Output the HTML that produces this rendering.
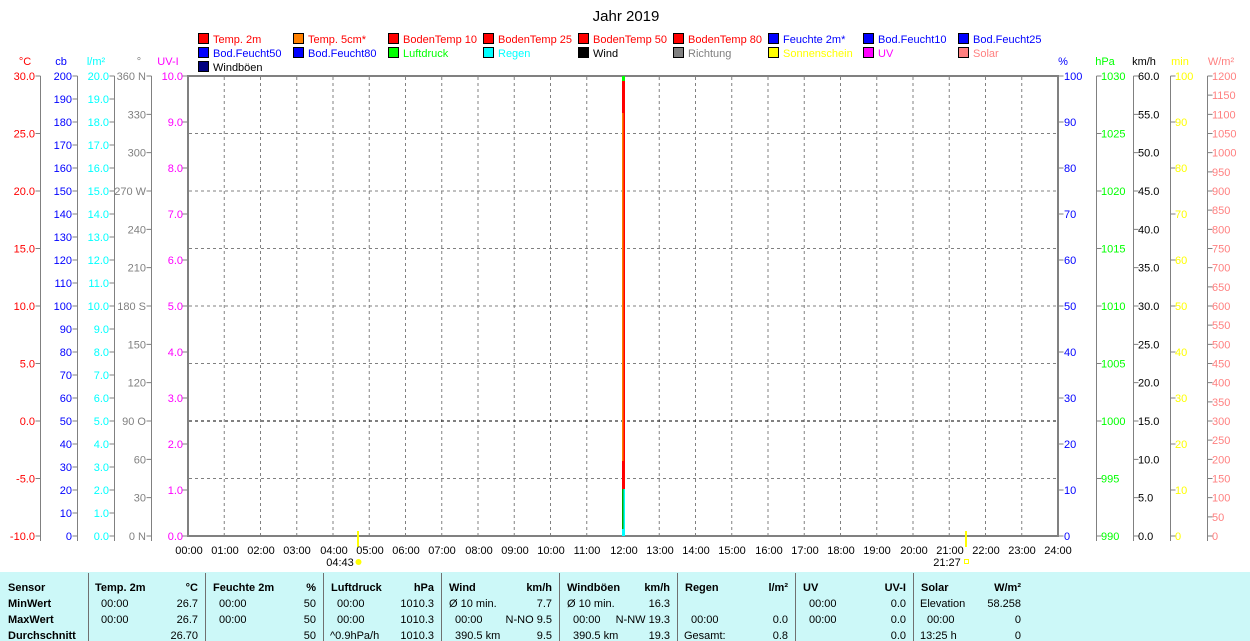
<!DOCTYPE html>
<html><head><meta charset="utf-8"><style>
html,body{margin:0;padding:0;background:#fff;}
svg{display:block;font-family:"Liberation Sans",sans-serif;font-size:11px;}
</style></head><body>
<svg width="1250" height="641" viewBox="0 0 1250 641" xmlns="http://www.w3.org/2000/svg">
<text x="626" y="21" font-size="15" text-anchor="middle">Jahr 2019</text>

<g stroke="#000" stroke-width="1">
<rect x="198.5" y="33.5" width="10" height="10" fill="#f00"/>
<rect x="293.5" y="33.5" width="10" height="10" fill="#ff8000"/>
<rect x="388.5" y="33.5" width="10" height="10" fill="#f00"/>
<rect x="483.5" y="33.5" width="10" height="10" fill="#f00"/>
<rect x="578.5" y="33.5" width="10" height="10" fill="#f00"/>
<rect x="673.5" y="33.5" width="10" height="10" fill="#f00"/>
<rect x="768.5" y="33.5" width="10" height="10" fill="#00f"/>
<rect x="863.5" y="33.5" width="10" height="10" fill="#00f"/>
<rect x="958.5" y="33.5" width="10" height="10" fill="#00f"/>
<rect x="198.5" y="47.5" width="10" height="10" fill="#00f"/>
<rect x="293.5" y="47.5" width="10" height="10" fill="#00f"/>
<rect x="388.5" y="47.5" width="10" height="10" fill="#0f0"/>
<rect x="483.5" y="47.5" width="10" height="10" fill="#0ff"/>
<rect x="578.5" y="47.5" width="10" height="10" fill="#000"/>
<rect x="673.5" y="47.5" width="10" height="10" fill="#808080"/>
<rect x="768.5" y="47.5" width="10" height="10" fill="#ff0"/>
<rect x="863.5" y="47.5" width="10" height="10" fill="#f0f"/>
<rect x="958.5" y="47.5" width="10" height="10" fill="#ff8080"/>
<rect x="198.5" y="61.5" width="10" height="10" fill="#000080"/>
</g>
<g>
<text x="213" y="43" fill="#f00">Temp. 2m</text>
<text x="308" y="43" fill="#f00">Temp. 5cm*</text>
<text x="403" y="43" fill="#f00">BodenTemp 10</text>
<text x="498" y="43" fill="#f00">BodenTemp 25</text>
<text x="593" y="43" fill="#f00">BodenTemp 50</text>
<text x="688" y="43" fill="#f00">BodenTemp 80</text>
<text x="783" y="43" fill="#00f">Feuchte 2m*</text>
<text x="878" y="43" fill="#00f">Bod.Feucht10</text>
<text x="973" y="43" fill="#00f">Bod.Feucht25</text>
<text x="213" y="57" fill="#00f">Bod.Feucht50</text>
<text x="308" y="57" fill="#00f">Bod.Feucht80</text>
<text x="403" y="57" fill="#0f0">Luftdruck</text>
<text x="498" y="57" fill="#0ff">Regen</text>
<text x="593" y="57" fill="#000">Wind</text>
<text x="688" y="57" fill="#808080">Richtung</text>
<text x="783" y="57" fill="#ff0">Sonnenschein</text>
<text x="878" y="57" fill="#f0f">UV</text>
<text x="973" y="57" fill="#ff8080">Solar</text>
<text x="213" y="71" fill="#000">Windböen</text>
</g>

<g text-anchor="middle">
<text x="25" y="65" fill="#f00">°C</text>
<text x="61" y="65" fill="#00f">cb</text>
<text x="96" y="65" fill="#0ff">l/m²</text>
<text x="139" y="65" fill="#808080">°</text>
<text x="168" y="65" fill="#f0f">UV-I</text>
<text x="1063" y="65" fill="#00f">%</text>
<text x="1105" y="65" fill="#0f0">hPa</text>
<text x="1144" y="65" fill="#000">km/h</text>
<text x="1180" y="65" fill="#ff0">min</text>
<text x="1221" y="65" fill="#ff8080">W/m²</text>
</g>

<path d="M224.25 77V536M260.5 77V536M296.75 77V536M333 77V536M369.25 77V536M405.5 77V536M441.75 77V536M478 77V536M514.25 77V536M550.5 77V536M586.75 77V536M623 77V536M659.25 77V536M695.5 77V536M731.75 77V536M768 77V536M804.25 77V536M840.5 77V536M876.75 77V536M913 77V536M949.25 77V536M985.5 77V536M1021.75 77V536" stroke="#808080" stroke-dasharray="3,3" fill="none"/>
<path d="M189 133.5H1058M189 191H1058M189 248.5H1058M189 306H1058M189 363.5H1058M189 478.5H1058" stroke="#808080" stroke-dasharray="3,3" fill="none"/>
<path d="M189 421H1058" stroke="#000" stroke-dasharray="3,3" fill="none"/>

<g stroke="#808080" fill="none">
<path d="M40.5 76V541M77.5 76V541M114.5 76V541M151.5 76V541M1096.5 76V541M1133.5 76V541M1170.5 76V541M1207.5 76V541"/>
<rect x="188" y="76" width="870" height="460" stroke-width="2"/>
<line x1="38" y1="75.5" x2="38" y2="537" stroke-width="5" stroke-dasharray="1 56.5"/>
<line x1="75" y1="75.5" x2="75" y2="537" stroke-width="5" stroke-dasharray="1 22"/>
<line x1="112" y1="75.5" x2="112" y2="537" stroke-width="5" stroke-dasharray="1 22"/>
<line x1="149" y1="75.5" x2="149" y2="537" stroke-width="5" stroke-dasharray="1 37.333"/>
<line x1="185" y1="75.5" x2="185" y2="537" stroke-width="5" stroke-dasharray="1 45"/>
<line x1="1061" y1="75.5" x2="1061" y2="537" stroke-width="5" stroke-dasharray="1 45"/>
<line x1="1099" y1="75.5" x2="1099" y2="537" stroke-width="5" stroke-dasharray="1 56.5"/>
<line x1="1136" y1="75.5" x2="1136" y2="537" stroke-width="5" stroke-dasharray="1 37.333"/>
<line x1="1173" y1="75.5" x2="1173" y2="537" stroke-width="5" stroke-dasharray="1 45"/>
<line x1="1210" y1="75.5" x2="1210" y2="537" stroke-width="5" stroke-dasharray="1 18.167"/>
</g>

<g transform="translate(0,4)" text-anchor="end">
<g fill="#f00">
<text x="35" y="76">30.0</text><text x="35" y="133.5">25.0</text><text x="35" y="191">20.0</text><text x="35" y="248.5">15.0</text><text x="35" y="306">10.0</text><text x="35" y="363.5">5.0</text><text x="35" y="421">0.0</text><text x="35" y="478.5">-5.0</text><text x="35" y="536">-10.0</text>
</g>
<g fill="#00f">
<text x="72" y="76">200</text><text x="72" y="99">190</text><text x="72" y="122">180</text><text x="72" y="145">170</text><text x="72" y="168">160</text><text x="72" y="191">150</text><text x="72" y="214">140</text><text x="72" y="237">130</text><text x="72" y="260">120</text><text x="72" y="283">110</text><text x="72" y="306">100</text><text x="72" y="329">90</text><text x="72" y="352">80</text><text x="72" y="375">70</text><text x="72" y="398">60</text><text x="72" y="421">50</text><text x="72" y="444">40</text><text x="72" y="467">30</text><text x="72" y="490">20</text><text x="72" y="513">10</text><text x="72" y="536">0</text>
</g>
<g fill="#0ff">
<text x="109" y="76">20.0</text><text x="109" y="99">19.0</text><text x="109" y="122">18.0</text><text x="109" y="145">17.0</text><text x="109" y="168">16.0</text><text x="109" y="191">15.0</text><text x="109" y="214">14.0</text><text x="109" y="237">13.0</text><text x="109" y="260">12.0</text><text x="109" y="283">11.0</text><text x="109" y="306">10.0</text><text x="109" y="329">9.0</text><text x="109" y="352">8.0</text><text x="109" y="375">7.0</text><text x="109" y="398">6.0</text><text x="109" y="421">5.0</text><text x="109" y="444">4.0</text><text x="109" y="467">3.0</text><text x="109" y="490">2.0</text><text x="109" y="513">1.0</text><text x="109" y="536">0.0</text>
</g>
<g fill="#808080">
<text x="146" y="76">360 N</text><text x="146" y="114.3">330</text><text x="146" y="152.7">300</text><text x="146" y="191">270 W</text><text x="146" y="229.3">240</text><text x="146" y="267.7">210</text><text x="146" y="306">180 S</text><text x="146" y="344.3">150</text><text x="146" y="382.7">120</text><text x="146" y="421">90 O</text><text x="146" y="459.3">60</text><text x="146" y="497.7">30</text><text x="146" y="536">0 N</text>
</g>
<g fill="#f0f">
<text x="183" y="76">10.0</text><text x="183" y="122">9.0</text><text x="183" y="168">8.0</text><text x="183" y="214">7.0</text><text x="183" y="260">6.0</text><text x="183" y="306">5.0</text><text x="183" y="352">4.0</text><text x="183" y="398">3.0</text><text x="183" y="444">2.0</text><text x="183" y="490">1.0</text><text x="183" y="536">0.0</text>
</g>
</g>

<g transform="translate(0,4)">
<g fill="#00f">
<text x="1064" y="76">100</text><text x="1064" y="122">90</text><text x="1064" y="168">80</text><text x="1064" y="214">70</text><text x="1064" y="260">60</text><text x="1064" y="306">50</text><text x="1064" y="352">40</text><text x="1064" y="398">30</text><text x="1064" y="444">20</text><text x="1064" y="490">10</text><text x="1064" y="536">0</text>
</g>
<g fill="#0f0">
<text x="1101" y="76">1030</text><text x="1101" y="133.5">1025</text><text x="1101" y="191">1020</text><text x="1101" y="248.5">1015</text><text x="1101" y="306">1010</text><text x="1101" y="363.5">1005</text><text x="1101" y="421">1000</text><text x="1101" y="478.5">995</text><text x="1101" y="536">990</text>
</g>
<g fill="#000">
<text x="1138" y="76">60.0</text><text x="1138" y="114.3">55.0</text><text x="1138" y="152.7">50.0</text><text x="1138" y="191">45.0</text><text x="1138" y="229.3">40.0</text><text x="1138" y="267.7">35.0</text><text x="1138" y="306">30.0</text><text x="1138" y="344.3">25.0</text><text x="1138" y="382.7">20.0</text><text x="1138" y="421">15.0</text><text x="1138" y="459.3">10.0</text><text x="1138" y="497.7">5.0</text><text x="1138" y="536">0.0</text>
</g>
<g fill="#ff0">
<text x="1175" y="76">100</text><text x="1175" y="122">90</text><text x="1175" y="168">80</text><text x="1175" y="214">70</text><text x="1175" y="260">60</text><text x="1175" y="306">50</text><text x="1175" y="352">40</text><text x="1175" y="398">30</text><text x="1175" y="444">20</text><text x="1175" y="490">10</text><text x="1175" y="536">0</text>
</g>
<g fill="#ff8080">
<text x="1212" y="76">1200</text><text x="1212" y="95.2">1150</text><text x="1212" y="114.3">1100</text><text x="1212" y="133.5">1050</text><text x="1212" y="152.7">1000</text><text x="1212" y="171.8">950</text><text x="1212" y="191">900</text><text x="1212" y="210.2">850</text><text x="1212" y="229.3">800</text><text x="1212" y="248.5">750</text><text x="1212" y="267.7">700</text><text x="1212" y="286.8">650</text><text x="1212" y="306">600</text><text x="1212" y="325.2">550</text><text x="1212" y="344.3">500</text><text x="1212" y="363.5">450</text><text x="1212" y="382.7">400</text><text x="1212" y="401.8">350</text><text x="1212" y="421">300</text><text x="1212" y="440.2">250</text><text x="1212" y="459.3">200</text><text x="1212" y="478.5">150</text><text x="1212" y="497.7">100</text><text x="1212" y="516.8">50</text><text x="1212" y="536">0</text>
</g>
</g>

<rect x="622" y="76" width="3" height="5" fill="#0f0"/>
<rect x="622" y="81" width="3" height="408" fill="#f00"/>
<rect x="622" y="113" width="1.5" height="348" fill="#ff8000"/>
<rect x="622" y="489" width="3" height="47" fill="#0ff"/>
<rect x="622" y="489" width="1.5" height="40" fill="#0a0"/>

<rect x="357" y="531" width="2" height="16" fill="#ff0"/>
<circle cx="358.5" cy="562" r="3" fill="#ff0"/>
<rect x="965" y="531" width="2" height="16" fill="#ff0"/>
<rect x="964.5" y="559.5" width="4" height="4" fill="none" stroke="#ff0"/>

<g text-anchor="middle" fill="#000">
<text x="189" y="554">00:00</text><text x="225" y="554">01:00</text><text x="261" y="554">02:00</text><text x="297" y="554">03:00</text><text x="334" y="554">04:00</text><text x="370" y="554">05:00</text><text x="406" y="554">06:00</text><text x="442" y="554">07:00</text><text x="479" y="554">08:00</text><text x="515" y="554">09:00</text><text x="551" y="554">10:00</text><text x="587" y="554">11:00</text><text x="624" y="554">12:00</text><text x="660" y="554">13:00</text><text x="696" y="554">14:00</text><text x="732" y="554">15:00</text><text x="769" y="554">16:00</text><text x="805" y="554">17:00</text><text x="841" y="554">18:00</text><text x="877" y="554">19:00</text><text x="914" y="554">20:00</text><text x="950" y="554">21:00</text><text x="986" y="554">22:00</text><text x="1022" y="554">23:00</text><text x="1058" y="554">24:00</text>
<text x="340" y="566">04:43</text><text x="947" y="566">21:27</text>
</g>

<rect x="0" y="572" width="1250" height="69" fill="#ccf8f8"/>
<path d="M88.5 573V641M205.5 573V641M323.5 573V641M441.5 573V641M559.5 573V641M677.5 573V641M795.5 573V641M913.5 573V641" stroke="#707070"/>
<g font-weight="bold">
<text x="8" y="591">Sensor</text><text x="8" y="607">MinWert</text><text x="8" y="623">MaxWert</text><text x="8" y="639">Durchschnitt</text>
<text x="95" y="591">Temp. 2m</text><text x="213" y="591">Feuchte 2m</text><text x="331" y="591">Luftdruck</text><text x="449" y="591">Wind</text><text x="567" y="591">Windböen</text><text x="685" y="591">Regen</text><text x="803" y="591">UV</text><text x="921" y="591">Solar</text>
<g text-anchor="end">
<text x="198" y="591">°C</text><text x="316" y="591">%</text><text x="434" y="591">hPa</text><text x="552" y="591">km/h</text><text x="670" y="591">km/h</text><text x="788" y="591">l/m²</text><text x="906" y="591">UV-I</text><text x="1021" y="591">W/m²</text>
</g>
</g>
<g>
<text x="101" y="607">00:00</text><text x="101" y="623">00:00</text>
<text x="219" y="607">00:00</text><text x="219" y="623">00:00</text>
<text x="337" y="607">00:00</text><text x="337" y="623">00:00</text><text x="330" y="639">^0.9hPa/h</text>
<text x="449" y="607">Ø 10 min.</text><text x="455" y="623">00:00</text><text x="455" y="639">390.5 km</text>
<text x="567" y="607">Ø 10 min.</text><text x="573" y="623">00:00</text><text x="573" y="639">390.5 km</text>
<text x="691" y="623">00:00</text><text x="684" y="639">Gesamt:</text>
<text x="809" y="607">00:00</text><text x="809" y="623">00:00</text>
<text x="920" y="607">Elevation</text><text x="927" y="623">00:00</text><text x="920" y="639">13:25 h</text>
<g text-anchor="end">
<text x="198" y="607">26.7</text><text x="198" y="623">26.7</text><text x="198" y="639">26.70</text>
<text x="316" y="607">50</text><text x="316" y="623">50</text><text x="316" y="639">50</text>
<text x="434" y="607">1010.3</text><text x="434" y="623">1010.3</text><text x="434" y="639">1010.3</text>
<text x="552" y="607">7.7</text><text x="552" y="623">N-NO 9.5</text><text x="552" y="639">9.5</text>
<text x="670" y="607">16.3</text><text x="670" y="623">N-NW 19.3</text><text x="670" y="639">19.3</text>
<text x="788" y="623">0.0</text><text x="788" y="639">0.8</text>
<text x="906" y="607">0.0</text><text x="906" y="623">0.0</text><text x="906" y="639">0.0</text>
<text x="1021" y="607">58.258</text><text x="1021" y="623">0</text><text x="1021" y="639">0</text>
</g>
</g>
</svg>
</body></html>
